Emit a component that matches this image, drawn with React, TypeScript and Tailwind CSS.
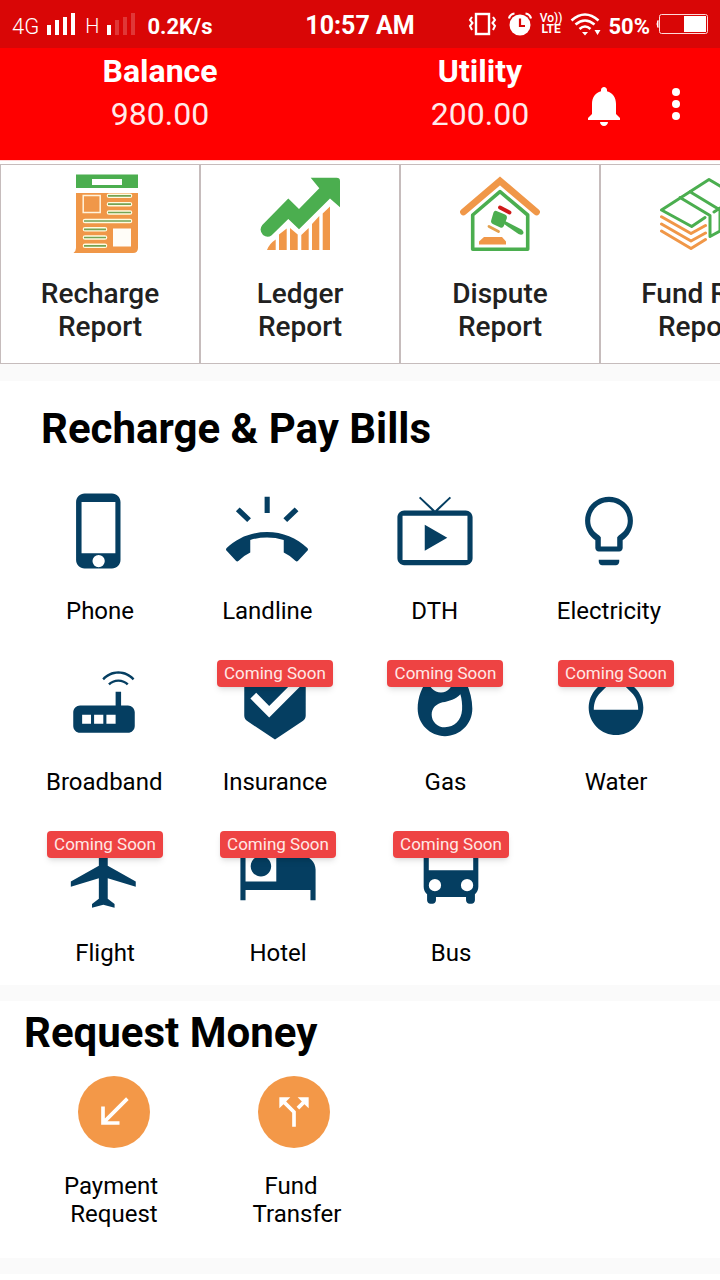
import React from 'react';

interface IconProps {
  className?: string;
}

interface Service {
  label: string;
  path: string;
  comingSoon?: boolean;
}

const SERVICE_ROWS: { className: string; items: Service[] }[] = [
  {
    className: 'justify-between px-[59px]',
    items: [
      {
        label: 'Phone',
        path: 'M15.5 1h-8C6.12 1 5 2.12 5 3.5v17C5 21.88 6.12 23 7.5 23h8c1.38 0 2.5-1.12 2.5-2.5v-17C18 2.12 16.88 1 15.5 1zM11.6 22.6a1.8 1.8 0 1 1 0-3.6 1.8 1.8 0 0 1 0 3.6zM16.5 18.5H6.6v-15h9.9z',
      },
      {
        label: 'Landline',
        path: 'M12 12.3C7.4 12.3 3.3 14 .2 17q-.4.4 0 .8l2.7 2.9q.4.4.8 0 1.500-1.500 3.400-2.400v-3.700Q9.500 13.900 12 13.900t4.900.7v3.700q1.900.9 3.400 2.400.4.4.8 0l2.700-2.900q.4-.4 0-.8C20.700 14 16.600 12.300 12 12.300zM11.300 2h1.500v4.700h-1.500zM2.900 6.200l1.100-1.100 3.300 3.200-1.100 1.100zM21.200 6.200l-1.100-1.100-3.300 3.200 1.100 1.100z',
      },
      {
        label: 'DTH',
        path: 'M21 6h-8.09l3.79-3.69L16.3 2 12 6 7.7 2l-.4.31L11.09 6H3c-1.1 0-2 .89-2 2v12c0 1.1.9 2 2 2h18c1.1 0 2-.9 2-2V8c0-1.11-.9-2-2-2zm.5 14.5h-19v-13h19zM9 10.2v7.6l6.6-3.8z',
      },
      {
        label: 'Electricity',
        path: 'M9 21c0 .55.45 1 1 1h4c.55 0 1-.45 1-1v-.6H9v.6zm3-19C8.14 2 5 5.14 5 9c0 2.38 1.19 4.47 3 5.74V17c0 .55.45 1 1 1h6c.55 0 1-.45 1-1v-2.26c1.81-1.27 3-3.36 3-5.74 0-3.86-3.14-7-7-7zm2.85 11.3l-.45.5v2.7H9.6v-2.7l-.45-.5C7.5 12.3 6.5 10.8 6.5 9c0-3.04 2.46-5.5 5.5-5.5s5.5 2.46 5.5 5.5c0 1.8-1 3.3-2.65 4.3z',
      },
    ],
  },
  {
    className: 'justify-between px-[46px]',
    items: [
      {
        label: 'Broadband',
        path: 'M11.500 5.100C12.700 3.800 14.300 3 16.200 3s3.500.8 4.700 2.100l-.5.5C19.300 4.400 17.900 3.700 16.200 3.700S13.100 4.400 12 5.600zM13.200 6.600c.7-.7 1.800-1.200 3-1.200s2.300.5 3 1.200l-.5.5c-.6-.6-1.500-1-2.500-1s-1.900.4-2.500 1zM19 13h-2V9h-1.6v4H5c-1.1 0-2 .9-2 2v4c0 1.1.9 2 2 2h14c1.1 0 2-.9 2-2v-4c0-1.1-.9-2-2-2zM8.2 18.4H5.6v-2.7h2.6v2.7zm3.6 0H9.1v-2.7h2.7v2.7zm3.6 0h-2.7v-2.7h2.7v2.7z',
      },
      {
        label: 'Insurance',
        comingSoon: true,
        path: 'M19 1H5c-1.1 0-1.99.9-1.99 2L3 15.93c0 .69.35 1.3.88 1.66L12 23l8.11-5.41c.53-.36.88-.97.88-1.66L21 3c0-1.1-.9-2-2-2zm-8.700 15.500l-5.500-5.500 1.700-1.700L10.300 13.170l7.590-7.590L19.500 7.300z',
      },
      {
        label: 'Gas',
        comingSoon: true,
        path: 'M13.5.67s.74 2.65.74 4.8c0 2.06-1.35 3.73-3.41 3.73-2.07 0-3.63-1.67-3.63-3.73l.03-.36C5.21 7.51 4 10.62 4 14c0 4.42 3.58 8 8 8s8-3.58 8-8C20 8.61 17.41 3.8 13.5.67zM12 19.4c-2.15 0-3.9-1.65-3.9-3.7 0-1.9 1.3-3.1 3.2-3.6 1.9-.4 3.9-.9 5.2-2.4.4 1.3.6 3 .5 4.6-.2 3.1-2.3 5.1-5 5.1z',
      },
      {
        label: 'Water',
        comingSoon: true,
        path: 'M17.66 8L12 2.35 6.34 8C4.78 9.56 4 11.64 4 13.64s.78 4.11 2.34 5.67 3.61 2.35 5.66 2.35 4.1-.79 5.66-2.35S20 15.64 20 13.64 19.22 9.56 17.66 8zM5.5 14.3c.01-2.2.72-3.8 1.86-4.9L12 4.7l4.64 4.7c1.14 1.1 1.85 2.7 1.86 4.9z',
      },
    ],
  },
  {
    className: 'gap-[57px] px-[47px]',
    items: [
      {
        label: 'Flight',
        comingSoon: true,
        path: 'M21 16v-1.5l-8.2-4.6V3.5c0-.83-.57-1.5-1.3-1.5s-1.3.67-1.3 1.5v6.4L2 14.5V16l8.2-2.5v6l-2 1.6v1.1l3.3-.9 3.3.9v-1.1l-2-1.6v-6L21 16z',
      },
      {
        label: 'Hotel',
        comingSoon: true,
        path: 'M7 13c1.66 0 3-1.34 3-3S8.66 7 7 7s-3 1.34-3 3 1.34 3 3 3zm12-6h-7.5v7.5H2.5V5H1v15h1.5v-3h19v3H23v-9c0-2.21-1.79-4-4-4z',
      },
      {
        label: 'Bus',
        comingSoon: true,
        path: 'M4 16c0 .88.39 1.67 1 2.22V20c0 .55.45 1 1 1h.6c.55 0 1-.45 1-1v-1h8.8v1c0 .55.45 1 1 1h.6c.55 0 1-.45 1-1v-1.78c.61-.55 1-1.34 1-2.22V6c0-3.5-3.58-4-8-4s-8 .5-8 4v10zm3.3 1.35a1.8 1.8 0 1 1 0-3.6 1.8 1.8 0 0 1 0 3.6zm9.4 0a1.8 1.8 0 1 1 0-3.6 1.8 1.8 0 0 1 0 3.6zM18.5 11.2h-13V6h13z',
      },
    ],
  },
];

const SignalBars: React.FC<{ strength: number }> = ({ strength }) => (
  <svg className="mb-1 ml-2 h-[22px] w-7" viewBox="0 0 28 22" fill="white">
    {[12, 7, 4, 0].map((top, i) => (
      <rect key={top} x={i * 8} y={top} width="4" height={22 - top} opacity={i < strength ? 1 : 0.2} />
    ))}
  </svg>
);

const StatusBar: React.FC = () => (
  <div className="grid h-12 grid-cols-[1fr_auto_1fr] items-center bg-[#d90606] px-3 pt-1 text-white">
    <div className="flex items-center">
      <span className="text-[22px] font-light">4G</span>
      <SignalBars strength={4} />
      <span className="ml-2.5 text-[20px] font-light">H</span>
      <SignalBars strength={1} />
      <span className="ml-3 text-[22px] font-bold">0.2K/s</span>
    </div>
    <span className="text-[25px] font-bold">10:57 AM</span>
    <div className="flex items-center justify-end">
      <svg className="mb-1 h-6 w-[30px]" viewBox="0 0 30 24" fill="none" stroke="white" strokeWidth="2">
        <rect x="8" y="2" width="13" height="20" strokeWidth="2.4" />
        <path d="M4 5L2 8l2.500 3L2 14l2 4M25 5l2 3-2.500 3 2.500 3-2 4" />
      </svg>
      <svg className="mb-1 ml-2.5 h-6 w-6" viewBox="0 0 24 24">
        <circle cx="12" cy="13" r="10.500" fill="white" />
        <path d="M1 6.500Q2 2 6.500 1.500M23 6.500Q22 2 17.500 1.500" fill="none" stroke="white" strokeWidth="2.200" />
        <path d="M12 6.500V14h5" fill="none" stroke="#d90606" strokeWidth="2.200" />
      </svg>
      <span className="mb-1 ml-2 flex flex-col text-center text-[12px] leading-[11px] font-bold">
        <span className="font-medium">Vo))</span>
        <span>LTE</span>
      </span>
      <svg className="mb-1 ml-2 h-6 w-8" viewBox="0 0 32 24" fill="none" stroke="white" strokeWidth="2.600">
        <path d="M1.500 8.500Q15 -3.500 28.500 8.500M5.500 12.500Q15 4.500 24.500 12.500M9.500 17Q15 12 20.500 17" />
        <path d="M12 20h6l-3 3.500zM24.500 18h6L27.500 23z" fill="white" stroke="none" />
      </svg>
      <span className="ml-1.5 text-[22px] font-bold">50%</span>
      <svg className="mb-1 ml-1.5 h-5 w-[52px]" viewBox="0 0 52 20">
        <rect x="3.500" y="0.500" width="48" height="19" rx="2" fill="none" stroke="#ffd9d9" />
        <rect x="28" y="2" width="22" height="16" fill="white" />
        <path d="M2 6.500Q0 10 2 13.500z" fill="white" stroke="white" />
      </svg>
    </div>
  </div>
);

const RechargeIcon: React.FC<IconProps> = ({ className }) => (
  <svg className={className} viewBox="0 0 80 80">
    <path d="M16 .5h62v13.500H16zM32 5v6h30V5z" fill="#4bae4f" fillRule="evenodd" />
    <path d="M16 19h62v55q0 5-5 5H13.500q2.500-2 2.500-5z" fill="#f09748" />
    <rect x="23.200" y="21.500" width="17" height="17" fill="none" stroke="#fff3dc" strokeWidth="1.500" />
    <g stroke="#fffbe0" strokeWidth="4.600" strokeLinecap="round">
      <path d="M49 21.800h21M49 30.200h21M49 38.500h21M25 47h45M25 55.300h20M25 63.500h20M25 71.800h20" />
    </g>
    <path d="M48 21.800h23M48 30.200h23M48 38.500h23M24 47h47M24 55.300h22M24 63.500h22M24 71.800h22" stroke="#74a354" strokeWidth="1.700" />
    <rect x="53" y="54.500" width="18" height="18" fill="#fffdf8" />
  </svg>
);

const LedgerIcon: React.FC<IconProps> = ({ className }) => (
  <svg className={className} viewBox="0 0 80 80">
    <path
      d="M2.300 51L28.300 24.500 39 35 59.300 14.300 50.700 3.800H76.500Q80 3.800 80 7V33.300L70 24.500 39 55.300 28.300 45 11.700 61.300Q7.500 64.500 3 61Q-1.500 56 2.300 51z"
      fill="#4bae4f"
    />
    <path
      d="M7 76q2-6 8.700-10.500V76zM19 76V60.500l7.700-6V76zM30 76V54l7.700 6.500V76zM41.300 76V61l7.400-7V76zM52 76V50l7.300-8V76zM62.700 76V39.500l7.300-7V76z"
      fill="#f09748"
    />
  </svg>
);

const DisputeIcon: React.FC<IconProps> = ({ className }) => (
  <svg className={className} viewBox="0 0 80 80" fill="none" strokeLinecap="round">
    <path d="M3.500 38L40 7 76.500 38" stroke="#f09748" strokeWidth="6.800" />
    <path d="M12.700 75.300V41L40 17.700 67.700 41v34.300z" stroke="#4bae4f" strokeWidth="3.600" strokeLinejoin="round" />
    <path d="M40 33.500l9.500 5" stroke="#d01a1a" strokeWidth="3.800" />
    <path d="M36.500 37l8.500 3.500q2.500 1 1.800 4l-3 7.500q-1 2.500-3.500 1.500l-7.500-3.500q-2.500-1.500-1.500-4l2.200-7.500q1-2.500 3-1.500z" fill="#4bae4f" />
    <path d="M45 47l16.500 8.500q3 2.500 1.500 4.500-1.500 1.500-4.500 0L44 50z" fill="#4bae4f" />
    <path d="M29 52.500l9.500 5" stroke="#e3a04d" strokeWidth="2.800" />
    <path d="M24 63h18l4 4.500V70.500H19V67.500z" fill="#f09748" />
  </svg>
);

const FundIcon: React.FC<IconProps> = ({ className }) => (
  <svg className={className} viewBox="0 0 80 80" fill="none" strokeWidth="3" strokeLinecap="round" strokeLinejoin="round">
    <path
      d="M45 43.500L31.700 52.500 1.500 36 49 5.500 79 23 61 34.500M20 23.500L50 41.500V62.500L60 57V36L30 17.700M54 38l6-4"
      stroke="#4bae4f"
    />
    <path d="M1.500 42.700L31 59.500l14.500-8M1.500 50L31 67l14.500-8M1.500 57L31 74.500l14.500-9" stroke="#f09748" />
  </svg>
);

const REPORTS = [
  { title: 'Recharge', Icon: RechargeIcon },
  { title: 'Ledger', Icon: LedgerIcon },
  { title: 'Dispute', Icon: DisputeIcon },
  { title: 'Fund Req', Icon: FundIcon },
];

const Header: React.FC = () => (
  <header className="grid h-28 grid-cols-[4fr_3fr_2fr] bg-[#ff0000] text-white">
    <div className="pt-0.5 text-center text-[32px] leading-[43px]">
      <p className="font-bold">Balance</p>
      <p className="text-[#ffeaea]">980.00</p>
    </div>
    <div className="pt-0.5 pl-20 text-center text-[32px] leading-[43px]">
      <p className="font-bold">Utility</p>
      <p className="text-[#ffeaea]">200.00</p>
    </div>
    <div className="flex items-center px-2">
      <button type="button" aria-label="Notifications" className="flex flex-1 justify-center pt-1">
        <svg className="size-12" viewBox="0 0 24 24" fill="currentColor">
          <path d="M12 22c1.100 0 2-.9 2-2h-4c0 1.100.89 2 2 2zm6-6v-5c0-3.070-1.640-5.640-4.500-6.320V4c0-.83-.67-1.500-1.500-1.500s-1.500.67-1.500 1.500v.68C7.630 5.360 6 7.920 6 11v5l-2 2v1h16v-1l-2-2z" />
        </svg>
      </button>
      <button type="button" aria-label="More" className="flex flex-1 justify-center">
        <svg className="size-12" viewBox="0 0 24 24" fill="currentColor">
          <circle cx="12" cy="6" r="2" />
          <circle cx="12" cy="12" r="2" />
          <circle cx="12" cy="18" r="2" />
        </svg>
      </button>
    </div>
  </header>
);

const ServiceButton: React.FC<{ service: Service }> = ({ service }) => (
  <button
    type="button"
    className={`relative flex flex-col items-center gap-[25px] ${service.comingSoon ? 'w-[116px]' : ''}`}
  >
    <svg className="size-[82px] text-[#053e61]" viewBox="0 0 24 24" fill="currentColor" fillRule="evenodd">
      <path d={service.path} />
    </svg>
    <span className="text-2xl leading-7">{service.label}</span>
    {service.comingSoon && (
      <span className="absolute inset-x-0 -top-px rounded-[4px] bg-[#ee4343] text-center text-[17px] leading-[27px] whitespace-nowrap text-[#ffe9e6] shadow-md">
        Coming Soon
      </span>
    )}
  </button>
);

const App: React.FC = () => {
  return (
    <div className="min-h-screen overflow-x-hidden bg-white font-['Roboto',sans-serif] text-black">
      <StatusBar />
      <Header />

      <nav className="flex overflow-hidden border-t border-[#ffd5d5] pt-[3px]">
        {REPORTS.map(({ title, Icon }) => (
          <button
            key={title}
            type="button"
            className="flex h-[200px] w-[200px] shrink-0 flex-col items-center border border-[#c6bcbc] pt-[9px]"
          >
            <Icon className="size-20" />
            <span className="mt-[23px] text-[28px] leading-[33px] font-medium text-[#212121]">
              {title}
              <br />
              Report
            </span>
          </button>
        ))}
      </nav>

      <main className="flex flex-col gap-4 bg-[#fafafa] pt-[17px] pb-4">
        <section className="bg-white pt-6 pb-[18px]">
          <h2 className="pl-[41px] text-[42px] leading-[48px] font-bold">Recharge &amp; Pay Bills</h2>
          <div className="mt-[37px] flex flex-col gap-9">
            {SERVICE_ROWS.map((row, i) => (
              <div key={i} className={`flex ${row.className}`}>
                {row.items.map((service) => (
                  <ServiceButton key={service.label} service={service} />
                ))}
              </div>
            ))}
          </div>
        </section>

        <section className="bg-white pt-2 pb-[30px]">
          <h2 className="pl-6 text-[42px] leading-[48px] font-bold">Request Money</h2>
          <div className="mt-[19px] flex pl-6">
            <button type="button" className="flex w-[180px] flex-col items-center gap-6">
              <span className="flex size-[72px] items-center justify-center rounded-full bg-[#f39848]">
                <svg className="size-11" viewBox="0 0 24 24" fill="white">
                  <path d="M20 5.410L18.590 4 7 15.590V9H5v10h10v-2H8.410z" />
                </svg>
              </span>
              <span className="text-2xl leading-7 whitespace-pre">{'Payment\u00a0\nRequest'}</span>
            </button>
            <button type="button" className="flex w-[180px] flex-col items-center gap-6">
              <span className="flex size-[72px] items-center justify-center rounded-full bg-[#f39848]">
                <svg className="size-11" viewBox="0 0 24 24" fill="white">
                  <path d="M14 4l2.290 2.290-2.880 2.880 1.420 1.420 2.880-2.880L20 10V4zm-4 0H4v6l2.290-2.290 4.710 4.700V20h2v-8.410l-5.290-5.300z" />
                </svg>
              </span>
              <span className="text-2xl leading-7 whitespace-pre">{'Fund\u00a0\n\u00a0Transfer'}</span>
            </button>
          </div>
        </section>
      </main>
    </div>
  );
};

export default App;
